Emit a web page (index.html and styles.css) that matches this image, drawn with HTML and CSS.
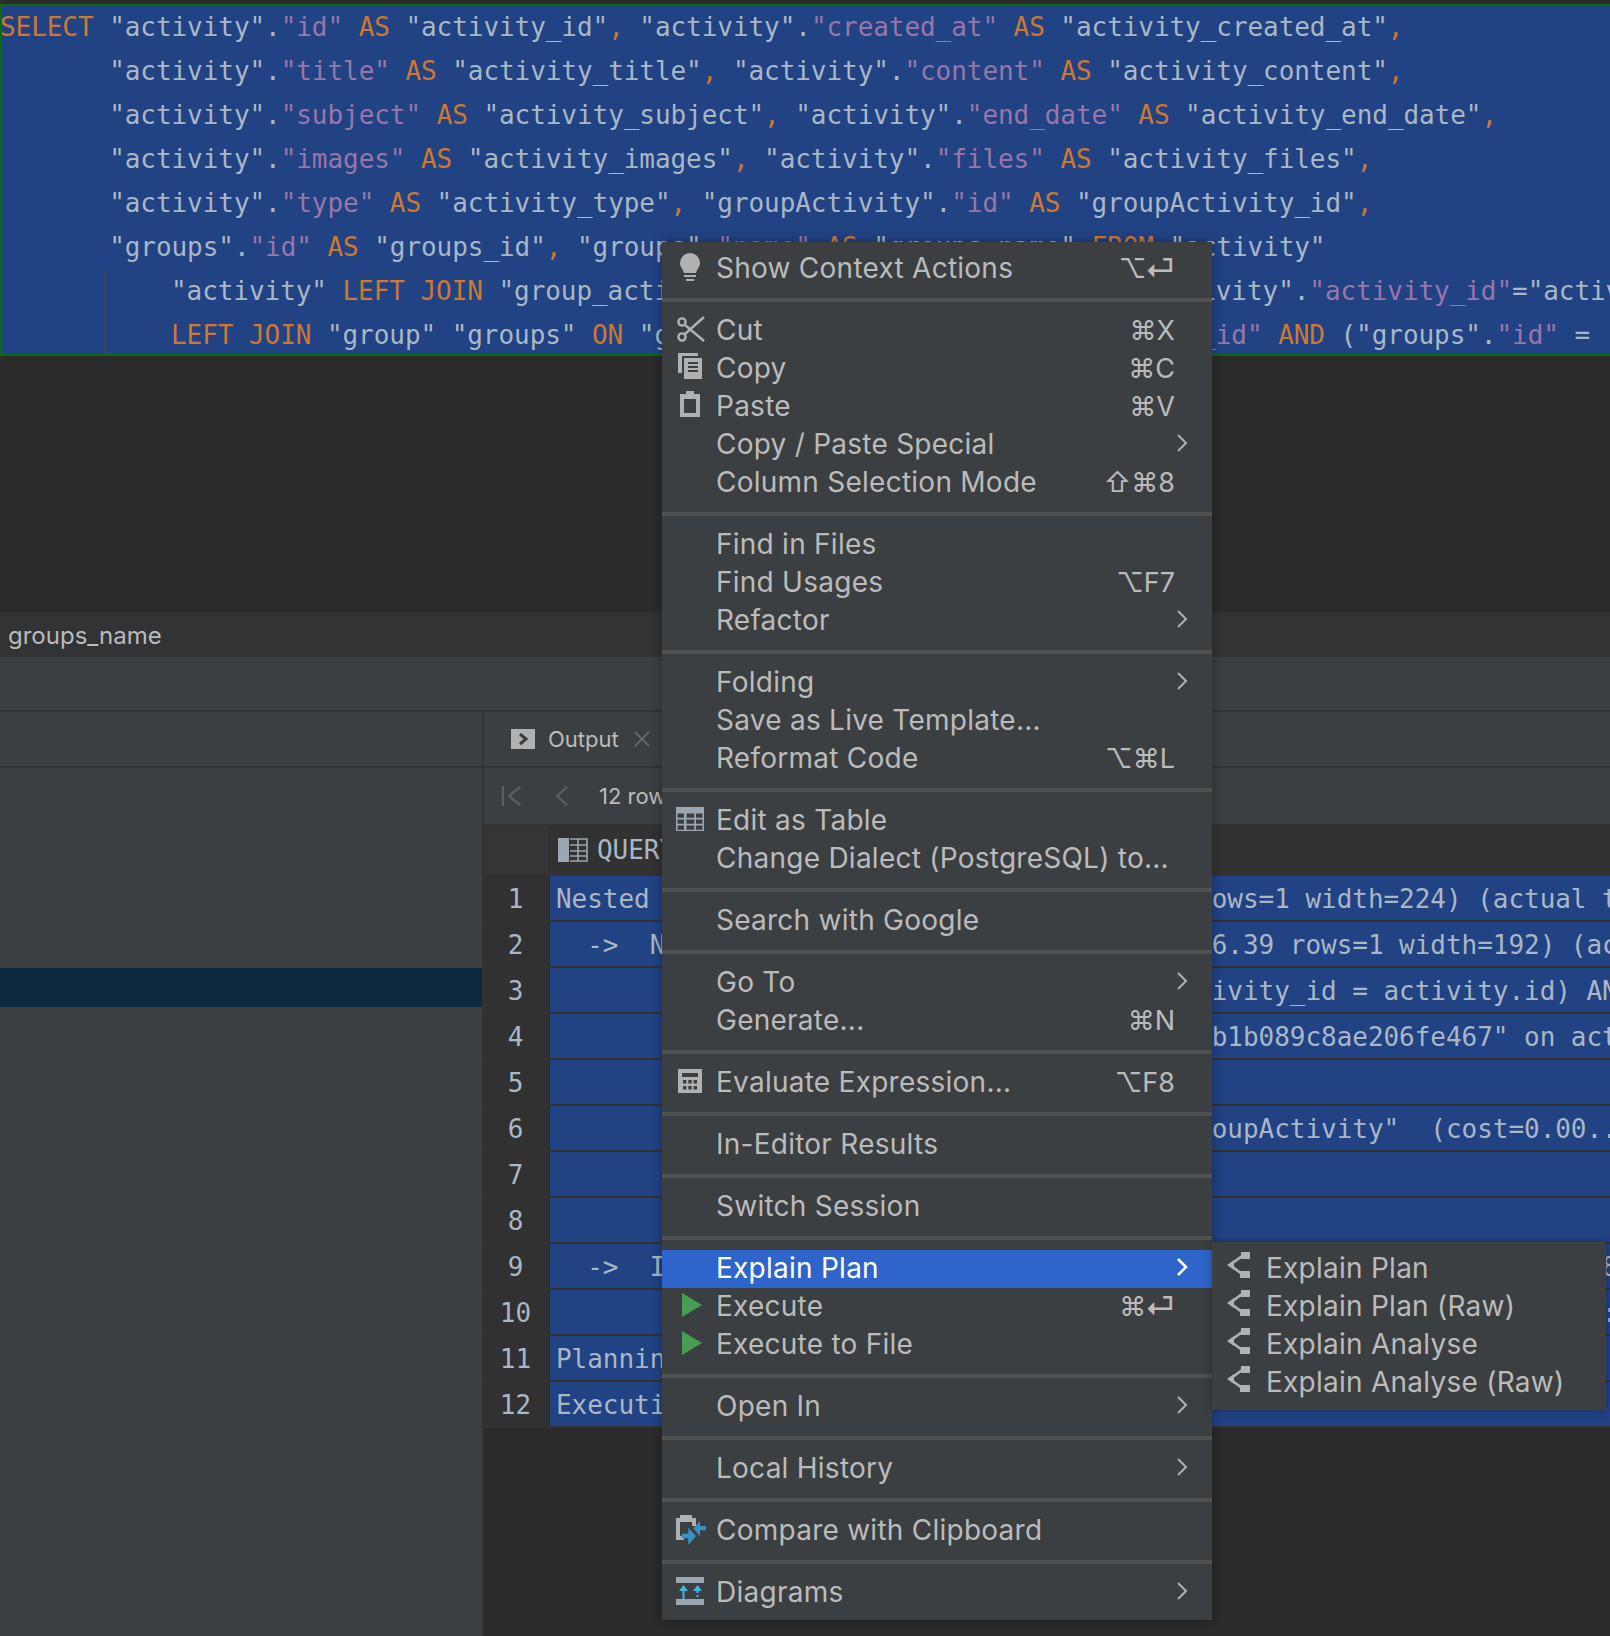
FILE: index.html
```html
<!DOCTYPE html>
<html lang="en">
<head>
    <meta charset="UTF-8">
    <meta name="viewport" content="width=device-width, initial-scale=1.0">
    <title>Explain Plan</title>
    <link rel="stylesheet" href="styles.css">
</head>
<body>
    <svg class="sprites" width="0" height="0">
        <symbol id="i-play" viewBox="0 0 32 32"><polygon points="8,4 28,16 8,28" fill="#499c54"/></symbol>
        <symbol id="i-plan" viewBox="0 0 32 32">
            <rect x="15" y="1" width="9" height="7" fill="#afb1b3"/>
            <rect x="14" y="20" width="10" height="7" fill="#afb1b3"/>
            <polygon points="1,14 8,9 8,19" fill="#afb1b3"/>
            <path d="M6 12.5 L16 5 M6 15.5 L16 23" stroke="#afb1b3" stroke-width="2.6" fill="none"/>
        </symbol>
    </svg>

    <!-- SQL editor -->
    <section class="editor">
        <div class="line"><span class="kw">SELECT</span> "activity".<span class="col">"id"</span> <span class="kw">AS</span> "activity_id"<span class="kw">,</span> "activity".<span class="col">"created_at"</span> <span class="kw">AS</span> "activity_created_at"<span class="kw">,</span></div>
        <div class="line">       "activity".<span class="col">"title"</span> <span class="kw">AS</span> "activity_title"<span class="kw">,</span> "activity".<span class="col">"content"</span> <span class="kw">AS</span> "activity_content"<span class="kw">,</span></div>
        <div class="line">       "activity".<span class="col">"subject"</span> <span class="kw">AS</span> "activity_subject"<span class="kw">,</span> "activity".<span class="col">"end_date"</span> <span class="kw">AS</span> "activity_end_date"<span class="kw">,</span></div>
        <div class="line">       "activity".<span class="col">"images"</span> <span class="kw">AS</span> "activity_images"<span class="kw">,</span> "activity".<span class="col">"files"</span> <span class="kw">AS</span> "activity_files"<span class="kw">,</span></div>
        <div class="line">       "activity".<span class="col">"type"</span> <span class="kw">AS</span> "activity_type"<span class="kw">,</span> "groupActivity".<span class="col">"id"</span> <span class="kw">AS</span> "groupActivity_id"<span class="kw">,</span></div>
        <div class="line">       "groups".<span class="col">"id"</span> <span class="kw">AS</span> "groups_id"<span class="kw">,</span> "groups".<span class="col">"name"</span> <span class="kw">AS</span> "groups_name" <span class="kw">FROM</span> "activity"</div>
        <div class="continuation">
            <div class="line">"activity" <span class="kw">LEFT JOIN</span> "group_activity" "groupActivity" <span class="kw">ON</span> "groupActivity".<span class="col">"activity_id"</span>="activity".<span class="col">"id"</span></div>
            <div class="line"><span class="kw">LEFT JOIN</span> "group" "groups" <span class="kw">ON</span> "groups".<span class="col">"id"</span>="groupActivity".<span class="col">"group_id"</span> <span class="kw">AND</span> ("groups".<span class="col">"id"</span> = </div>
        </div>
    </section>
    <div class="editor-blank"></div>
    <div class="crumb">groups_name</div>
    <div class="band"></div>

    <!-- services tool window -->
    <section class="services">
        <aside class="tree">
            <div class="tree-head"></div>
            <div class="tree-body">
                <div class="tree-row"></div>
            </div>
        </aside>
        <div class="result">
            <div class="tabs">
                <svg class="tab-icon" width="24" height="20" viewBox="0 0 24 20">
                    <rect width="24" height="20" fill="#afb1b3"/>
                    <path d="M9 5l6 5-6 5" stroke="#3c3f41" stroke-width="3" fill="none"/>
                </svg>
                <span class="tab-label">Output</span>
                <svg class="tab-close" width="16" height="16" viewBox="0 0 16 16">
                    <path d="M1 1L15 15M15 1L1 15" stroke="#6e7072" stroke-width="1.6"/>
                </svg>
            </div>
            <div class="toolbar">
                <svg width="22" height="20" viewBox="0 0 22 20">
                    <path d="M2 0V20M19 1L8 10L19 19" stroke="#5a5d5f" stroke-width="2.4" fill="none"/>
                </svg>
                <svg class="tool-prev" width="14" height="20" viewBox="0 0 14 20">
                    <path d="M12 1L2 10L12 19" stroke="#5a5d5f" stroke-width="2.4" fill="none"/>
                </svg>
                <span class="row-count">12 rows</span>
            </div>
            <div class="grid-head">
                <div class="num"></div>
                <div class="head-cell">
                    <svg width="30" height="24" viewBox="0 0 30 24">
                        <rect width="11" height="24" fill="#9aa7b0"/>
                        <path d="M12 1H29V23H12M12 7H29M12 13H29M12 18H29M20 1V23" stroke="#9aa7b0" stroke-width="1.6" fill="none"/>
                    </svg>
                    <span>QUERY PLAN</span>
                </div>
            </div>
            <div class="row"><div class="num">1</div><div class="cell">Nested Loop Left Join  (cost=8.45..24.51 rows=1 width=224) (actual time=0.1</div></div>
            <div class="row"><div class="num">2</div><div class="cell">  -&gt;  Nested Loop Left Join  (cost=4.30..16.39 rows=1 width=192) (actual time</div></div>
            <div class="row"><div class="num">3</div><div class="cell">           Join Filter: (groupActivity.activity_id = activity.id) AND (x)</div></div>
            <div class="row"><div class="num">4</div><div class="cell">        -&gt;  Index Scan using "PK_a1c2e4f70b1b089c8ae206fe467" on activity</div></div>
            <div class="row"><div class="num">5</div><div class="cell"></div></div>
            <div class="row"><div class="num">6</div><div class="cell">        -&gt;  Seq Scan on group_activity "groupActivity"  (cost=0.00..8.00 rows=1</div></div>
            <div class="row"><div class="num">7</div><div class="cell"></div></div>
            <div class="row"><div class="num">8</div><div class="cell"></div></div>
            <div class="row"><div class="num">9</div><div class="cell">  -&gt;  Index Scan using "PK_group" on "group" "groups"  (cost=0.14..8.16 rows=1 width=32)</div></div>
            <div class="row"><div class="num">10</div><div class="cell">        Index Cond: ((id = "groupActivity".group_id) AND (id = '1'::uuid) AND (x))</div></div>
            <div class="row"><div class="num">11</div><div class="cell">Planning Time: 0.5 ms</div></div>
            <div class="row"><div class="num">12</div><div class="cell">Execution Time: 0.1 ms</div></div>
        </div>
    </section>

    <!-- context menu -->
    <div class="menu">
        <div class="item">
            <svg class="icon" width="32" height="32" viewBox="0 0 32 32">
                <path d="M16 2a10 10 0 0 1 10 10c0 4-3 6-4 10H10c-1-4-4-6-4-10A10 10 0 0 1 16 2z" fill="#afb1b3"/>
                <rect x="10" y="24" width="12" height="2" fill="#afb1b3"/>
                <rect x="12" y="28" width="8" height="2" fill="#afb1b3"/>
            </svg>
            <span>Show Context Actions</span><span class="shortcut">⌥<span class="ret">⏎</span></span>
        </div>
        <hr>
        <div class="item">
            <svg class="icon" width="32" height="32" viewBox="0 0 32 32">
                <circle cx="8" cy="9" r="3.6" stroke="#afb1b3" stroke-width="2.4" fill="none"/>
                <circle cx="8" cy="24" r="3.6" stroke="#afb1b3" stroke-width="2.4" fill="none"/>
                <path d="M11 12L30 28M11 21L30 4" stroke="#afb1b3" stroke-width="2.4" fill="none"/>
            </svg>
            <span>Cut</span><span class="shortcut">⌘X</span>
        </div>
        <div class="item">
            <svg class="icon" width="32" height="32" viewBox="0 0 32 32">
                <path d="M4 2H24V5H8V22H4z" fill="#afb1b3"/>
                <rect x="10" y="7" width="18" height="21" fill="#afb1b3"/>
                <path d="M14 12H24M14 16H24M14 20H24" stroke="#3c3f41" stroke-width="2"/>
            </svg>
            <span>Copy</span><span class="shortcut">⌘C</span>
        </div>
        <div class="item">
            <svg class="icon" width="32" height="32" viewBox="0 0 32 32">
                <rect x="6" y="5" width="20" height="23" fill="#afb1b3"/>
                <rect x="10" y="10" width="12" height="14" fill="#3c3f41"/>
                <rect x="12" y="2" width="8" height="6" fill="#afb1b3"/>
            </svg>
            <span>Paste</span><span class="shortcut">⌘V</span>
        </div>
        <div class="item"><span class="text">Copy / Paste Special</span><svg class="arrow" width="12" height="18" viewBox="0 0 12 18"><path d="M2 1l8 8-8 8"/></svg></div>
        <div class="item"><span class="text">Column Selection Mode</span><span class="shortcut">⇧⌘8</span></div>
        <hr>
        <div class="item"><span class="text">Find in Files</span></div>
        <div class="item"><span class="text">Find Usages</span><span class="shortcut">⌥F7</span></div>
        <div class="item"><span class="text">Refactor</span><svg class="arrow" width="12" height="18" viewBox="0 0 12 18"><path d="M2 1l8 8-8 8"/></svg></div>
        <hr>
        <div class="item"><span class="text">Folding</span><svg class="arrow" width="12" height="18" viewBox="0 0 12 18"><path d="M2 1l8 8-8 8"/></svg></div>
        <div class="item"><span class="text">Save as Live Template...</span></div>
        <div class="item"><span class="text">Reformat Code</span><span class="shortcut">⌥⌘L</span></div>
        <hr>
        <div class="item">
            <svg class="icon" width="32" height="32" viewBox="0 0 32 32">
                <rect x="2" y="4" width="28" height="24" fill="#9aa7b0"/>
                <path d="M3.5 10.5h6.5v4.2H3.5zM12.5 10.5h7.8v4.2h-7.8zM22 10.5h6.5v4.2H22zM3.5 16.5h6.5v4.2H3.5zM12.5 16.5h7.8v4.2h-7.8zM22 16.5h6.5v4.2H22zM3.5 22.5h6.5v4.2H3.5zM12.5 22.5h7.8v4.2h-7.8zM22 22.5h6.5v4.2H22z" fill="#3c3f41"/>
            </svg>
            <span>Edit as Table</span>
        </div>
        <div class="item"><span class="text">Change Dialect (PostgreSQL) to...</span></div>
        <hr>
        <div class="item"><span class="text">Search with Google</span></div>
        <hr>
        <div class="item"><span class="text">Go To</span><svg class="arrow" width="12" height="18" viewBox="0 0 12 18"><path d="M2 1l8 8-8 8"/></svg></div>
        <div class="item"><span class="text">Generate...</span><span class="shortcut">⌘N</span></div>
        <hr>
        <div class="item">
            <svg class="icon" width="32" height="32" viewBox="0 0 32 32">
                <rect x="4" y="4" width="24" height="24" fill="#afb1b3"/>
                <path d="M8 8h16v4H8zM9 15h3.4v3.4H9zM14.3 15h3.4v3.4h-3.4zM19.6 15H23v3.4h-3.4zM9 21h3.4v3.4H9zM14.3 21h3.4v3.4h-3.4zM19.6 21H23v3.4h-3.4z" fill="#3c3f41"/>
            </svg>
            <span>Evaluate Expression...</span><span class="shortcut">⌥F8</span>
        </div>
        <hr>
        <div class="item"><span class="text">In-Editor Results</span></div>
        <hr>
        <div class="item"><span class="text">Switch Session</span></div>
        <hr>
        <div class="item active">
            <span class="text">Explain Plan</span><svg class="arrow" width="12" height="18" viewBox="0 0 12 18"><path d="M2 1l8 8-8 8"/></svg>
            <div class="submenu">
                <div class="item"><svg class="icon" width="32" height="32"><use href="#i-plan"/></svg><span>Explain Plan</span></div>
                <div class="item"><svg class="icon" width="32" height="32"><use href="#i-plan"/></svg><span>Explain Plan (Raw)</span></div>
                <div class="item"><svg class="icon" width="32" height="32"><use href="#i-plan"/></svg><span>Explain Analyse</span></div>
                <div class="item"><svg class="icon" width="32" height="32"><use href="#i-plan"/></svg><span>Explain Analyse (Raw)</span></div>
            </div>
        </div>
        <div class="item"><svg class="icon" width="32" height="32"><use href="#i-play"/></svg><span>Execute</span><span class="shortcut">⌘<span class="ret">⏎</span></span></div>
        <div class="item"><svg class="icon" width="32" height="32"><use href="#i-play"/></svg><span>Execute to File</span></div>
        <hr>
        <div class="item"><span class="text">Open In</span><svg class="arrow" width="12" height="18" viewBox="0 0 12 18"><path d="M2 1l8 8-8 8"/></svg></div>
        <hr>
        <div class="item"><span class="text">Local History</span><svg class="arrow" width="12" height="18" viewBox="0 0 12 18"><path d="M2 1l8 8-8 8"/></svg></div>
        <hr>
        <div class="item">
            <svg class="icon" width="32" height="32" viewBox="0 0 32 32">
                <path d="M2 5H6V2H18V5H22V13H18V9H6V23H10V27H2z" fill="#afb1b3"/>
                <polygon points="19.3,15.3 26,8 26,13 32,13 32,17.3 26,17.3 26,23" fill="#3592c4"/>
                <polygon points="22,23 14.3,14.7 14.3,20.7 7.7,20.7 7.7,25.3 14.3,25.3 14.3,32" fill="#3592c4"/>
            </svg>
            <span>Compare with Clipboard</span>
        </div>
        <hr>
        <div class="item">
            <svg class="icon" width="32" height="32" viewBox="0 0 32 32">
                <rect x="2" y="2" width="28" height="6" fill="#9aa7b0"/>
                <rect x="2" y="24" width="28" height="6" fill="#9aa7b0"/>
                <polygon points="9.5,10 14,16 5,16" fill="#40b6e0"/>
                <rect x="8.5" y="16" width="2" height="8" fill="#40b6e0"/>
                <polygon points="23.5,10 28,16 19,16" fill="#40b6e0"/>
                <path d="M23.5 16V24" stroke="#40b6e0" stroke-width="2" stroke-dasharray="2 2"/>
            </svg>
            <span>Diagrams</span><svg class="arrow" width="12" height="18" viewBox="0 0 12 18"><path d="M2 1l8 8-8 8"/></svg>
        </div>
    </div>
</body>
</html>
```

FILE: styles.css
```css
* {
    margin: 0;
    padding: 0;
    box-sizing: border-box;
}

body {
    position: relative;
    height: 1636px;
    overflow: hidden;
    background: #2b2b2b;
    font-family: Inter, "DejaVu Sans", sans-serif;
    color: #bbbbbb;
}

.sprites {
    position: absolute;
}

/* editor */
.editor {
    height: 352px;
    margin-top: 4px;
    overflow: hidden;
    background: #214283;
    border: 2px solid #0d6b0f;
    border-width: 2px 0 2px 2px;
    color: #a9b7c6;
}

.line,
.cell,
.head-cell span {
    font-family: "DejaVu Sans Mono", "Liberation Mono", monospace;
    font-size: 26px;
    letter-spacing: -0.04px;
    white-space: pre;
}

.line {
    height: 44px;
    margin-left: -2px;
    letter-spacing: -0.06px;
    line-height: 42px;
}

.kw {
    color: #cc7832;
}

.col {
    color: #9876aa;
}

.continuation {
    margin-left: 102px;
    padding-left: 67px;
    border-left: 2px solid #3a4356;
}

.editor-blank {
    height: 256px;
}

.crumb {
    height: 45px;
    padding-left: 8px;
    background: #313335;
    border-top: 1px solid #2f2f2f;
    font-size: 24px;
    line-height: 46px;
}

.band {
    height: 55px;
    background: #3c3f41;
    border-bottom: 2px solid #323232;
}

/* bottom tool window */
.services {
    display: flex;
    height: 924px;
}

.tree {
    width: 484px;
    flex: none;
    background: #3c3f41;
    border-right: 2px solid #323232;
}

.tree-head {
    height: 56px;
    border-bottom: 2px solid #323232;
}

.tree-body {
    padding-top: 200px;
}

.tree-row {
    height: 39px;
    background: #0d293e;
}

.result {
    flex: 1;
    min-width: 0;
}

.tabs {
    display: flex;
    align-items: center;
    height: 56px;
    padding-left: 27px;
    background: #3c3f41;
    border-bottom: 2px solid #323232;
}

.tab-label {
    margin-left: 13px;
    font-size: 22px;
}

.tab-close {
    margin-left: 15px;
}

.toolbar {
    display: flex;
    align-items: center;
    height: 56px;
    padding-left: 17px;
    background: #3c3f41;
}

.tool-prev {
    margin-left: 32px;
}

.row-count {
    margin-left: 30px;
    font-size: 22px;
}

.grid-head,
.row {
    display: flex;
}

.grid-head {
    height: 52px;
    background: #323232;
    border-top: 2px solid #323232;
}

.grid-head .num {
    height: 48px;
    background: #353535;
}

.head-cell {
    display: flex;
    align-items: center;
    gap: 9px;
    padding-left: 8px;
    height: 48px;
    color: #a9b7c6;
}

.row {
    height: 46px;
    border-bottom: 2px solid #323232;
}

.num {
    width: 66px;
    flex: none;
    padding-right: 2px;
    background: #313131;
    border-right: 1px solid #2b2b2b;
    font-family: "DejaVu Sans Mono", monospace;
    font-size: 26px;
    line-height: 46px;
    text-align: center;
    color: #a9b7c6;
}

.cell {
    flex: 1;
    min-width: 0;
    overflow: hidden;
    padding-left: 6px;
    background: #214283;
    line-height: 46px;
    color: #a9b7c6;
}

/* context menu */
.menu {
    position: absolute;
    left: 662px;
    top: 242px;
    width: 550px;
    padding: 8px 0;
    background: #3c3f41;
    box-shadow: 0 0 10px rgba(0, 0, 0, 0.35);
    font-size: 28px;
    letter-spacing: 0.25px;
}

.menu hr {
    height: 4px;
    margin: 10px 0;
    border: 0;
    background: #515151;
}

.item {
    position: relative;
    display: flex;
    align-items: center;
    height: 38px;
    padding: 0 24px 2px 12px;
    white-space: nowrap;
}

.item .text {
    margin-left: 42px;
}

.icon {
    flex: none;
    margin: 0 10px 2px 0;
}

.shortcut {
    margin-left: auto;
    margin-right: 13px;
    font-size: 27px;
    letter-spacing: 0;
}

.ret {
    margin-left: -2px;
    font-size: 31px;
    line-height: 1;
    vertical-align: -3px;
}

.arrow {
    margin: 0 0 2px auto;
    fill: none;
    stroke: #afb1b3;
    stroke-width: 2;
}

.item.active {
    background: #2f65ca;
    color: #ffffff;
}

.item.active > .arrow {
    stroke: #ffffff;
    stroke-width: 2.6;
}

.submenu {
    position: absolute;
    left: 100%;
    top: -8px;
    width: 394px;
    padding: 8px 0;
    background: #3c3f41;
    box-shadow: 0 0 8px rgba(0, 0, 0, 0.35);
    color: #bbbbbb;
}

.submenu .item {
    padding-left: 14px;
}

.submenu .icon {
    margin-right: 8px;
}
```
